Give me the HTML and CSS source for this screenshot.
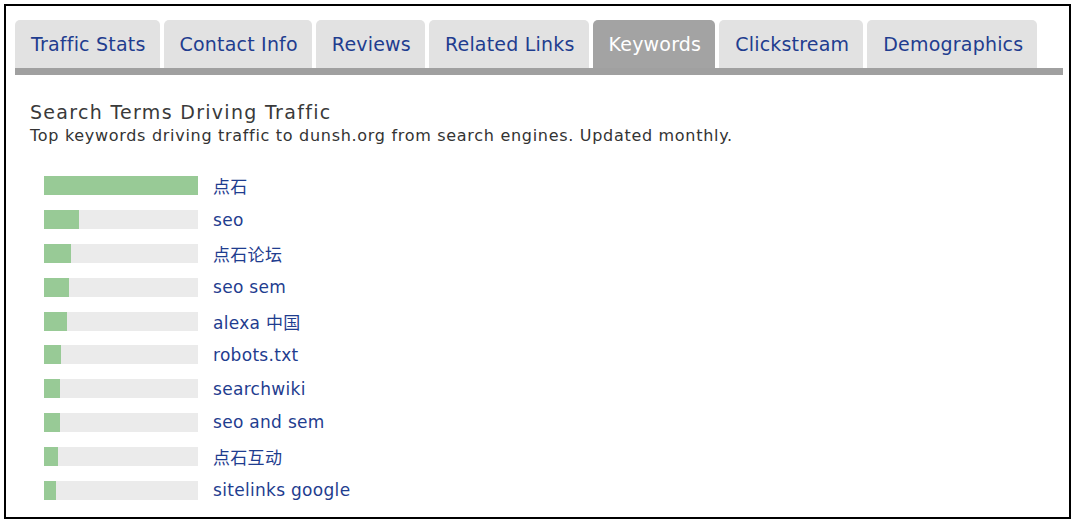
FILE: index.html
```html
<!DOCTYPE html>
<html>
<head>
<meta charset="utf-8">
<link rel="stylesheet" href="styles.css">
</head>
<body>
<div class="frame">
  <div class="tabs">
    <div class="tab">Traffic Stats</div>
    <div class="tab">Contact Info</div>
    <div class="tab">Reviews</div>
    <div class="tab">Related Links</div>
    <div class="tab active">Keywords</div>
    <div class="tab">Clickstream</div>
    <div class="tab">Demographics</div>
  </div>
  <div class="tabbar"></div>
  <div class="content">
    <h2 class="title">Search Terms Driving Traffic</h2>
    <p class="sub">Top keywords driving traffic to dunsh.org from search engines. Updated monthly.</p>
    <ul class="list">
      <li class="row"><span class="track"><span class="fill" style="width:154px"></span></span><a class="kw">点石</a></li>
      <li class="row"><span class="track"><span class="fill" style="width:35px"></span></span><a class="kw">seo</a></li>
      <li class="row"><span class="track"><span class="fill" style="width:27px"></span></span><a class="kw">点石论坛</a></li>
      <li class="row"><span class="track"><span class="fill" style="width:25px"></span></span><a class="kw">seo sem</a></li>
      <li class="row"><span class="track"><span class="fill" style="width:23px"></span></span><a class="kw">alexa 中国</a></li>
      <li class="row"><span class="track"><span class="fill" style="width:17px"></span></span><a class="kw">robots.txt</a></li>
      <li class="row"><span class="track"><span class="fill" style="width:16px"></span></span><a class="kw">searchwiki</a></li>
      <li class="row"><span class="track"><span class="fill" style="width:16px"></span></span><a class="kw">seo and sem</a></li>
      <li class="row"><span class="track"><span class="fill" style="width:14px"></span></span><a class="kw">点石互动</a></li>
      <li class="row"><span class="track"><span class="fill" style="width:12px"></span></span><a class="kw">sitelinks google</a></li>
    </ul>
  </div>
</div>
</body>
</html>
```

FILE: styles.css
```css
html, body {
  margin: 0;
  padding: 0;
  background: #fff;
}
body {
  padding: 4px 0 0 4px;
  font-family: "DejaVu Sans", Verdana, "Noto Sans CJK SC", sans-serif;
}
.frame {
  box-sizing: border-box;
  width: 1067px;
  height: 515px;
  border: 2px solid #000;
  padding: 14px 6px 0 9px;
}
.tabs {
  display: flex;
  gap: 4px;
  height: 48px;
}
.tab {
  background: #e2e2e2;
  border-radius: 5px 5px 0 0;
  padding: 0 14px 0 16px;
  line-height: 48px;
  font-size: 19px;
  letter-spacing: 0.2px;
  color: #1f3d8f;
  white-space: nowrap;
}
.tab.active {
  background: #a3a3a3;
  color: #fff;
}
.tabbar {
  height: 7px;
  background: #a0a0a0;
}
.content {
  padding: 26px 0 0 15px;
}
.title {
  margin: 0;
  font-size: 19px;
  letter-spacing: 1.3px;
  font-weight: normal;
  color: #3a3a3a;
  line-height: 22px;
}
.sub {
  margin: 3px 0 0 0;
  font-size: 16px;
  letter-spacing: 0.7px;
  color: #333;
  line-height: 20px;
}
.list {
  list-style: none;
  margin: 23px 0 0 0;
  padding: 0 0 0 14px;
}
.row {
  display: flex;
  align-items: center;
  height: 33.8px;
}
.track {
  display: block;
  width: 154px;
  height: 19px;
  background: #ebebeb;
  margin-right: 15px;
}
.fill {
  display: block;
  height: 100%;
  background: #98ca96;
}
.kw {
  font-size: 17px;
  letter-spacing: 0.3px;
  color: #1f3d8f;
  font-family: "DejaVu Sans", "Noto Sans CJK SC", sans-serif;
}
```
